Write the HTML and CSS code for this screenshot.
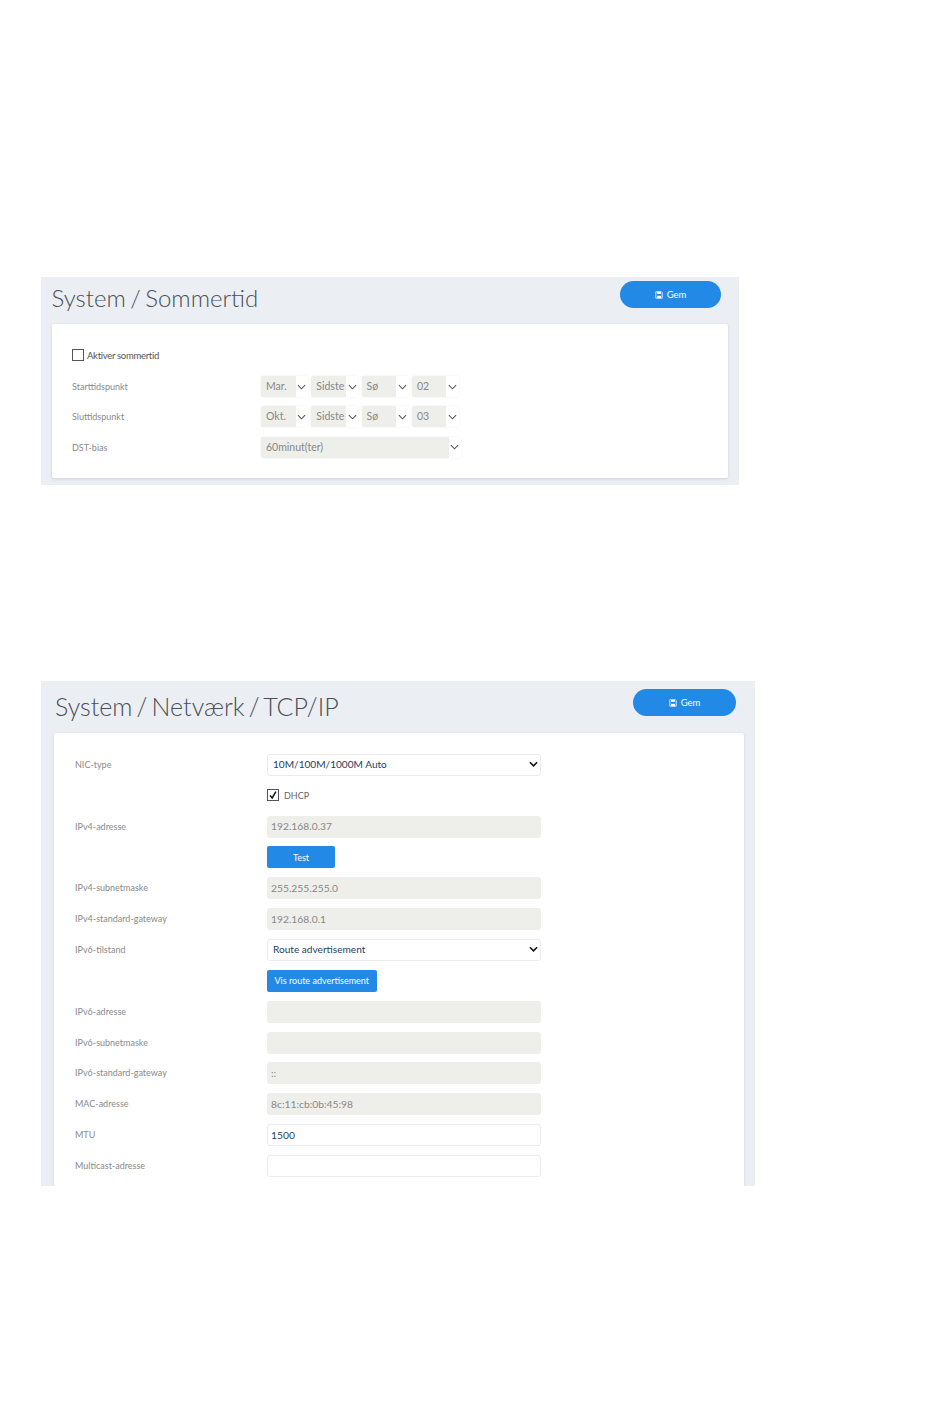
FILE: index.html
```html
<!DOCTYPE html>
<html lang="da">
<head>
<meta charset="utf-8">
<title>System</title>
<link rel="stylesheet" href="styles.css">
</head>
<body>
<section class="panel panel-dst">
  <header class="head">
    <h1 class="title">System / Sommertid</h1>
    <button class="save"><svg class="save-icon" viewBox="0 0 10 10"><path d="M1 1h7l1 1v7H1z" fill="none" stroke="#fff" stroke-width="1"/><rect x="2.5" y="1" width="5" height="2.5" fill="#fff"/><rect x="2.5" y="6" width="5" height="3" fill="#fff"/></svg>Gem</button>
  </header>
  <div class="card">
    <div class="check-row">
      <span class="box"></span><span class="check-label">Aktiver sommertid</span>
    </div>
    <div class="row">
      <span class="label">Starttidspunkt</span>
      <div class="selects">
        <div class="sel"><span class="val">Mar.</span><span class="arrow"><svg class="chev" viewBox="0 0 10 6"><path d="M1 1l4 4 4-4"/></svg></span></div>
        <div class="sel"><span class="val">Sidste</span><span class="arrow"><svg class="chev" viewBox="0 0 10 6"><path d="M1 1l4 4 4-4"/></svg></span></div>
        <div class="sel"><span class="val">Sø</span><span class="arrow"><svg class="chev" viewBox="0 0 10 6"><path d="M1 1l4 4 4-4"/></svg></span></div>
        <div class="sel"><span class="val">02</span><span class="arrow"><svg class="chev" viewBox="0 0 10 6"><path d="M1 1l4 4 4-4"/></svg></span></div>
      </div>
    </div>
    <div class="row">
      <span class="label">Sluttidspunkt</span>
      <div class="selects">
        <div class="sel"><span class="val">Okt.</span><span class="arrow"><svg class="chev" viewBox="0 0 10 6"><path d="M1 1l4 4 4-4"/></svg></span></div>
        <div class="sel"><span class="val">Sidste</span><span class="arrow"><svg class="chev" viewBox="0 0 10 6"><path d="M1 1l4 4 4-4"/></svg></span></div>
        <div class="sel"><span class="val">Sø</span><span class="arrow"><svg class="chev" viewBox="0 0 10 6"><path d="M1 1l4 4 4-4"/></svg></span></div>
        <div class="sel"><span class="val">03</span><span class="arrow"><svg class="chev" viewBox="0 0 10 6"><path d="M1 1l4 4 4-4"/></svg></span></div>
      </div>
    </div>
    <div class="row">
      <span class="label">DST-bias</span>
      <div class="selects">
        <div class="sel sel-wide"><span class="val">60minut(ter)</span><span class="arrow"><svg class="chev" viewBox="0 0 10 6"><path d="M1 1l4 4 4-4"/></svg></span></div>
      </div>
    </div>
  </div>
</section>

<section class="panel panel-tcp">
  <header class="head">
    <h1 class="title">System / Netværk / TCP/IP</h1>
    <button class="save"><svg class="save-icon" viewBox="0 0 10 10"><path d="M1 1h7l1 1v7H1z" fill="none" stroke="#fff" stroke-width="1"/><rect x="2.5" y="1" width="5" height="2.5" fill="#fff"/><rect x="2.5" y="6" width="5" height="3" fill="#fff"/></svg>Gem</button>
  </header>
  <div class="card">
    <div class="frow"><span class="flabel">NIC-type</span><div class="field field-select"><span>10M/100M/1000M Auto</span><svg class="chev-dark" viewBox="0 0 10 6"><path d="M1 1l4 4 4-4"/></svg></div></div>
    <div class="frow"><span class="flabel"></span><div class="dhcp"><span class="box box-on"><svg viewBox="0 0 12 12"><path d="M2.5 6.5l2.5 3 4.5-7.5"/></svg></span><span>DHCP</span></div></div>
    <div class="frow"><span class="flabel">IPv4-adresse</span><div class="field field-off">192.168.0.37</div></div>
    <div class="frow"><span class="flabel"></span><button class="btn btn-test">Test</button></div>
    <div class="frow"><span class="flabel">IPv4-subnetmaske</span><div class="field field-off">255.255.255.0</div></div>
    <div class="frow"><span class="flabel">IPv4-standard-gateway</span><div class="field field-off">192.168.0.1</div></div>
    <div class="frow"><span class="flabel">IPv6-tilstand</span><div class="field field-select"><span>Route advertisement</span><svg class="chev-dark" viewBox="0 0 10 6"><path d="M1 1l4 4 4-4"/></svg></div></div>
    <div class="frow"><span class="flabel"></span><button class="btn">Vis route advertisement</button></div>
    <div class="frow"><span class="flabel">IPv6-adresse</span><div class="field field-off"></div></div>
    <div class="frow"><span class="flabel">IPv6-subnetmaske</span><div class="field field-off"></div></div>
    <div class="frow"><span class="flabel">IPv6-standard-gateway</span><div class="field field-off">::</div></div>
    <div class="frow"><span class="flabel">MAC-adresse</span><div class="field field-off">8c:11:cb:0b:45:98</div></div>
    <div class="frow"><span class="flabel">MTU</span><div class="field field-on">1500</div></div>
    <div class="frow"><span class="flabel">Multicast-adresse</span><div class="field field-on"></div></div>
  </div>
</section>
</body>
</html>
```
FILE: styles.css
```css
* { box-sizing: border-box; }
html, body { margin: 0; background: #fff; }
body {
  font-family: Lato, "Liberation Sans", sans-serif;
  padding: 277px 0 0 41px;
  height: 1409px;
  overflow: hidden;
}
.panel { background: #ebeef3; overflow: hidden; }
.panel-dst { width: 698px; height: 208px; padding: 0 11px 7px 10.5px; }
.panel-tcp { width: 714px; height: 505px; margin-top: 196px; padding: 0 11px 0 13px; }
.head { display: flex; justify-content: space-between; align-items: flex-start; }
.panel-dst .head { height: 47px; }
.panel-tcp .head { height: 52px; }
.title {
  margin: 0;
  font-weight: 300;
  font-size: 24px;
  line-height: 30px;
  word-spacing: -2px;
  color: #4a4f55;
  white-space: nowrap;
}
.panel-dst .title { margin-top: 6px; }
.panel-tcp .title { margin: 9.5px 0 0 1px; font-size: 25px; word-spacing: -2.6px; }
.save {
  display: flex;
  align-items: center;
  justify-content: center;
  gap: 4px;
  height: 27px;
  border: 0;
  border-radius: 14px;
  background: #2389e6;
  color: #fff;
  font: 400 9.5px Lato, sans-serif;
}
.panel-dst .save { width: 101px; margin: 4px 7px 0 0; }
.panel-tcp .save { width: 103px; margin: 8px 8px 0 0; }
.save-icon { width: 8px; height: 8px; }
.card {
  background: #fff;
  box-shadow: 0 1px 3px rgba(120, 135, 160, .25);
  border-radius: 2px;
}
.panel-dst .card { height: 154px; padding: 25px 20.5px 0; }
.panel-tcp .card { height: 460px; padding: 16px 21px 0; border-radius: 2px 2px 0 0; }
.check-row { display: flex; align-items: center; gap: 3px; height: 12px; margin-bottom: 15px; }
.box {
  display: block;
  flex: none;
  width: 12px;
  height: 12px;
  border: 1px solid #555;
  background: #fff;
}
.check-label { font-size: 9.5px; color: #555; letter-spacing: -.3px; }
.row { display: flex; align-items: center; height: 21px; margin-bottom: 9.3px; }
.label { width: 189px; font-size: 9px; color: #8a8a8a; }
.selects { display: flex; gap: 3.3px; }
.sel {
  display: flex;
  width: 47px;
  height: 21px;
  border-radius: 2px;
  overflow: hidden;
  box-shadow: 0 0 2px rgba(0, 0, 0, .08);
}
.sel-wide { width: 200px; }
.val {
  flex: 1;
  display: flex;
  align-items: center;
  padding: 0 0 1px 5px;
  background: #eeeeea;
  color: #888;
  font-size: 10.5px;
  white-space: nowrap;
  overflow: hidden;
}
.arrow { flex: none; width: 12.5px; display: flex; align-items: center; justify-content: center; background: #fff; }
.chev { width: 9px; height: 6px; fill: none; stroke: #555; stroke-width: 1.2; }
.frow { display: flex; align-items: center; height: 30.85px; }
.flabel { flex: none; width: 192px; font-size: 9px; color: #8a8a8a; }
.field {
  display: flex;
  align-items: center;
  justify-content: space-between;
  width: 274px;
  height: 22px;
  margin-top: 1px;
  padding: 0 0 1px 4px;
  border-radius: 3px;
  font-size: 10.3px;
}
.field-off { background: #eeeeea; color: #888; }
.field-on { background: #fff; border: 1px solid #ececec; color: #1d3f63; padding-left: 3px; }
.field-select {
  background: #fff;
  border: 1px solid #ececec;
  color: #1d3f63;
  padding: 0 2px 1px 5px;
  font-size: 10.1px;
}
.chev-dark { width: 9px; height: 6px; fill: none; stroke: #111; stroke-width: 1.7; }
.dhcp { display: flex; align-items: center; gap: 5px; font-size: 9px; color: #666; }
.box-on svg { display: block; width: 10px; height: 10px; fill: none; stroke: #111; stroke-width: 1.8; }
.btn {
  height: 22px;
  margin-top: 1px;
  padding: 0 7.5px;
  border: 0;
  border-radius: 2px;
  background: #2389e6;
  color: #fff;
  font: 400 9px Lato, sans-serif;
  white-space: nowrap;
}
.btn-test { width: 68px; }
```
